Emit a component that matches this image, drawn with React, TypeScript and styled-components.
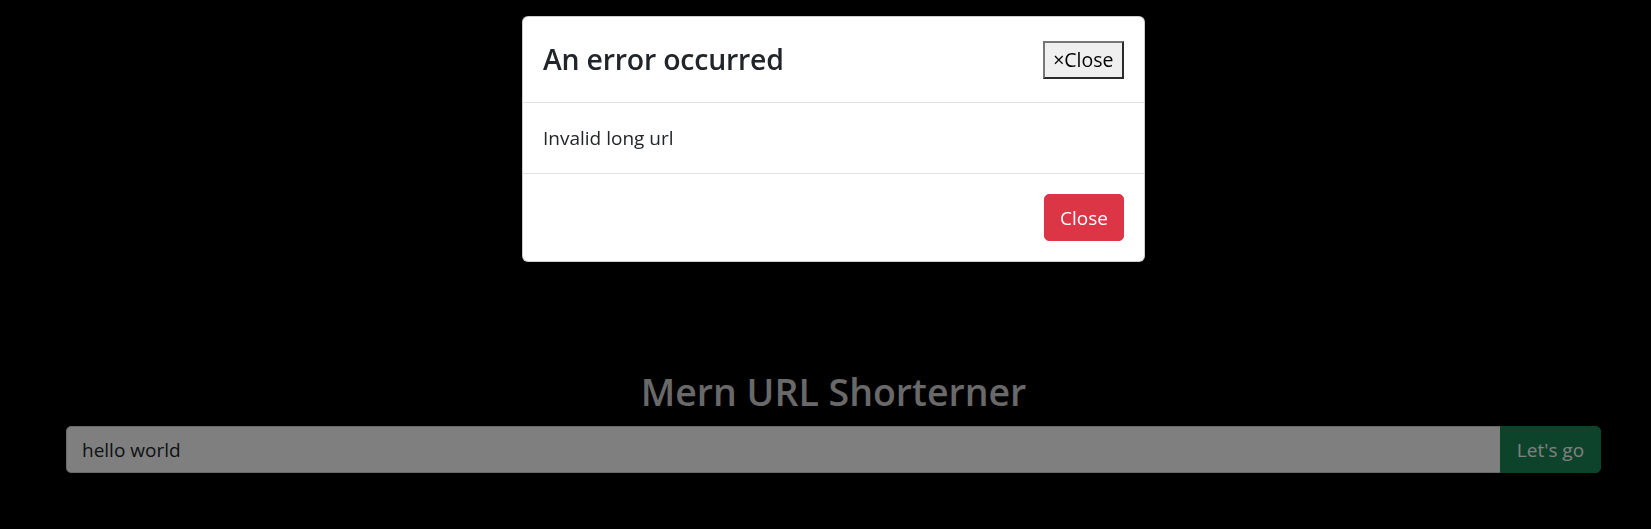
import React from "react";
import styled, { createGlobalStyle } from "styled-components";

const GlobalStyle = createGlobalStyle`
  *, *::before, *::after { box-sizing: border-box; }
  html, body { margin: 0; padding: 0; }
  body {
    background: #000;
    font-family: "Open Sans", "Noto Sans", "Liberation Sans", sans-serif;
    color: #212529;
  }
`;

const Page = styled.main`
  min-height: 529px;
  padding: 368px 50px 0 66px;
`;

const Heading = styled.h2`
  margin: 0 0 10px;
  text-align: center;
  font-size: 37.5px;
  font-weight: 600;
  line-height: 48px;
  color: lightgray;
`;

const InputGroup = styled.form`
  display: flex;
  align-items: stretch;
`;

const UrlInput = styled.input`
  flex: 1;
  min-width: 0;
  height: 47px;
  padding: 7.5px 15px;
  font: inherit;
  font-size: 19px;
  line-height: 30px;
  color: #212529;
  background: #fff;
  border: 1px solid #ced4da;
  border-radius: 5px 0 0 5px;
  outline: none;
`;

const GoButton = styled.button`
  margin-left: -1px;
  width: 101px;
  padding: 7.5px 0;
  font: inherit;
  font-size: 19px;
  line-height: 30px;
  color: #fff;
  background: #198754;
  border: 1px solid #198754;
  border-radius: 0 5px 5px 0;
`;

const Backdrop = styled.div`
  position: fixed;
  inset: 0;
  background: rgba(0, 0, 0, 0.5);
`;

const ModalLayer = styled.div`
  position: fixed;
  inset: 0;
  display: flex;
  justify-content: center;
  align-items: flex-start;
  padding: 16px 0 0 16px;
`;

const ModalContent = styled.div`
  width: 623px;
  background: #fff;
  border: 1px solid rgba(0, 0, 0, 0.2);
  border-radius: 6px;
  display: flex;
  flex-direction: column;
`;

const ModalHeader = styled.div`
  display: flex;
  align-items: center;
  justify-content: space-between;
  padding: 20px;
  border-bottom: 1px solid #dee2e6;
`;

const ModalTitle = styled.div`
  font-size: 28.4px;
  font-weight: 600;
  line-height: 45px;
  color: #212529;
  letter-spacing: -0.2px;
`;

const PlainCloseButton = styled.button`
  height: 38px;
  padding: 0 8.5px;
  font: inherit;
  font-size: 19.5px;
  line-height: 30px;
  color: #000;
  background: #efefef;
  border: 2px solid;
  border-color: #767676 #2b2b2b #2b2b2b #767676;
  border-radius: 0;
`;

const ModalBody = styled.div`
  padding: 20px;
  font-size: 19px;
  line-height: 30px;
  color: #212529;
`;

const ModalFooter = styled.div`
  display: flex;
  justify-content: flex-end;
  padding: 15px;
  border-top: 1px solid #dee2e6;
`;

const DangerButton = styled.button`
  margin: 5px;
  width: 80px;
  padding: 7.5px 0;
  font: inherit;
  font-size: 19px;
  line-height: 30px;
  color: #fff;
  background: #dc3545;
  border: 1px solid #dc3545;
  border-radius: 5px;
`;

export default function App() {
  return (
    <>
      <GlobalStyle />
      <Page>
        <Heading>Mern URL Shorterner</Heading>
        <InputGroup onSubmit={(e) => e.preventDefault()}>
          <UrlInput defaultValue="hello world" />
          <GoButton type="submit">Let's go</GoButton>
        </InputGroup>
      </Page>
      <Backdrop />
      <ModalLayer>
        <ModalContent role="dialog">
          <ModalHeader>
            <ModalTitle>An error occurred</ModalTitle>
            <PlainCloseButton type="button">
              <span>×</span>
              <span>Close</span>
            </PlainCloseButton>
          </ModalHeader>
          <ModalBody>Invalid long url</ModalBody>
          <ModalFooter>
            <DangerButton type="button">Close</DangerButton>
          </ModalFooter>
        </ModalContent>
      </ModalLayer>
    </>
  );
}
